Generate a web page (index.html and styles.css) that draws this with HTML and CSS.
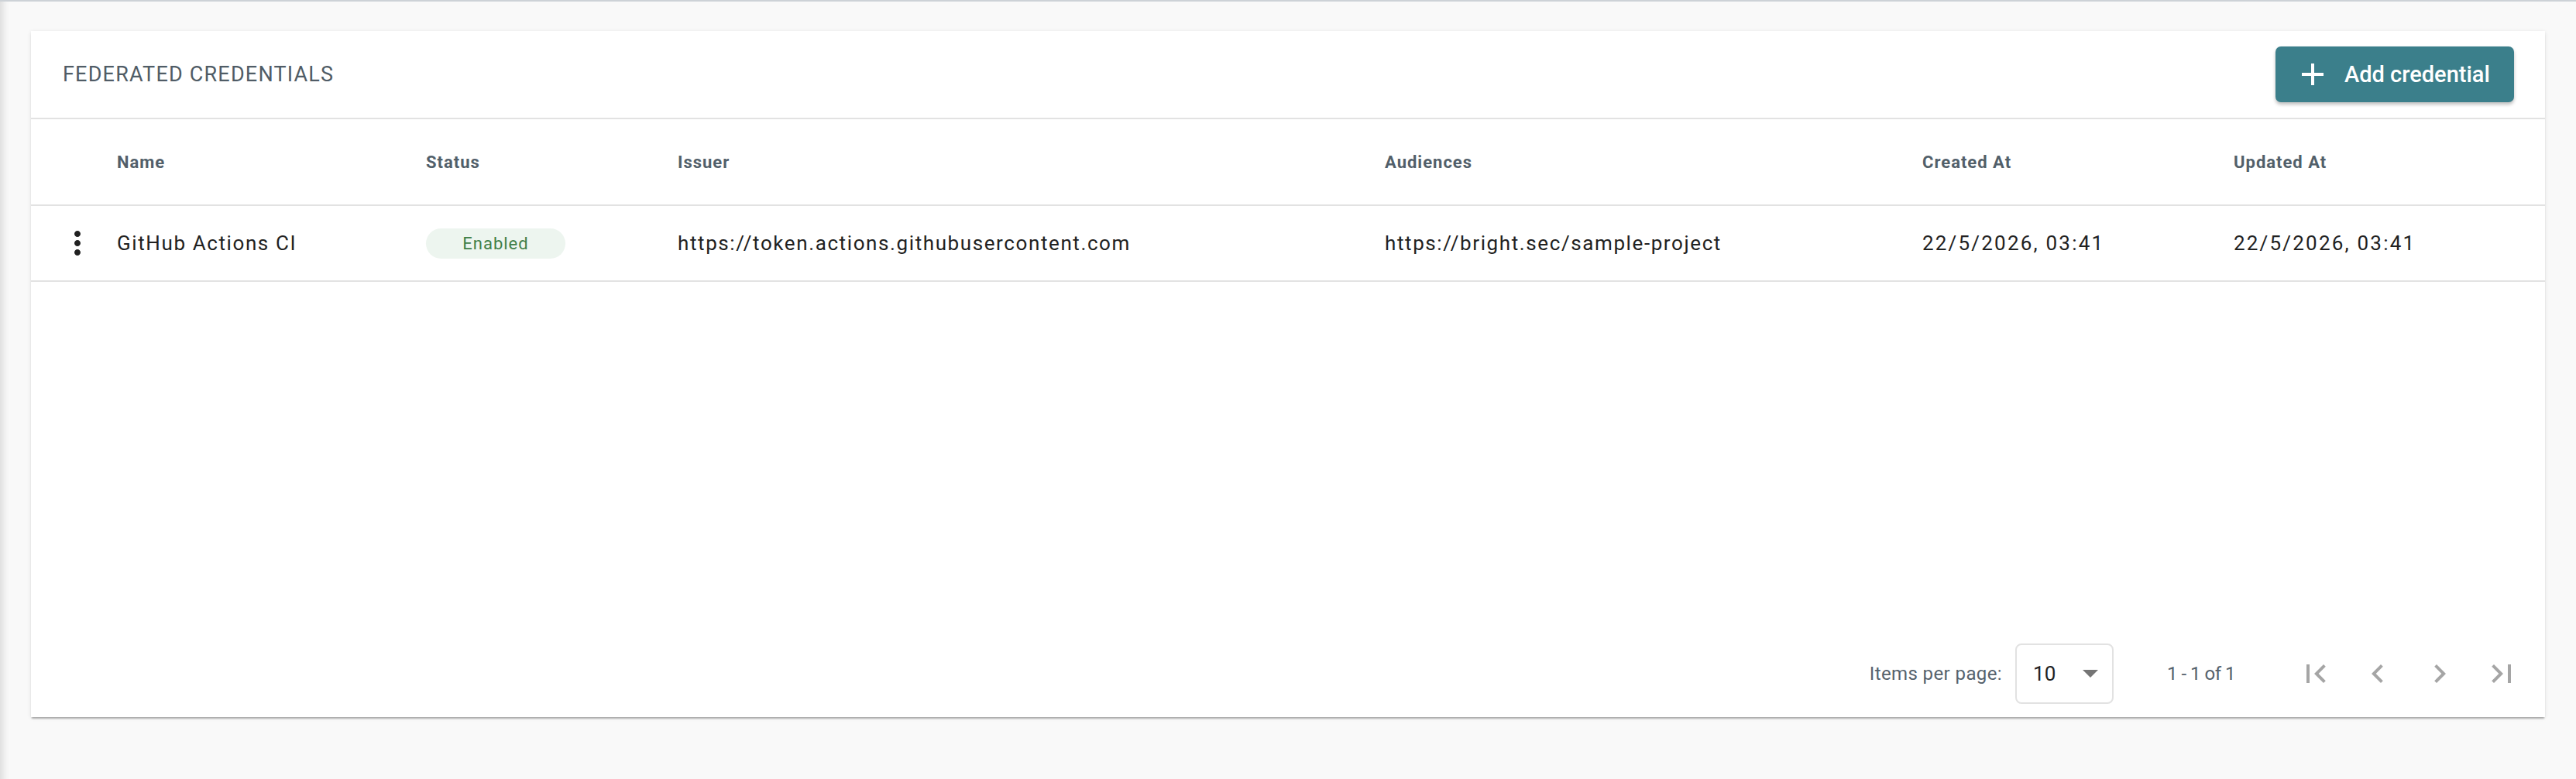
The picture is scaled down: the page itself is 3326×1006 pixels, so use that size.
FILE: index.html
```html
<!DOCTYPE html>
<html lang="en">
<head>
    <meta charset="UTF-8">
    <meta name="viewport" content="width=device-width, initial-scale=1.0">
    <title>Federated Credentials</title>
    <link rel="stylesheet" href="styles.css">
</head>
<body>
    <div class="page">
        <div class="card">
            <div class="card-header">
                <h1>Federated Credentials</h1>
                <button class="add-btn">
                    <svg class="plus" viewBox="0 0 28 28" width="28" height="28">
                        <path d="M14 0v28M0 14h28" stroke="#fff" stroke-width="4" fill="none"/>
                    </svg>
                    <span>Add credential</span>
                </button>
            </div>

            <div class="table">
                <div class="row head">
                    <div class="cell"></div>
                    <div class="cell">Name</div>
                    <div class="cell">Status</div>
                    <div class="cell">Issuer</div>
                    <div class="cell">Audiences</div>
                    <div class="cell">Created At</div>
                    <div class="cell">Updated At</div>
                </div>
                <div class="row">
                    <div class="cell actions">
                        <svg viewBox="0 0 24 24" width="48" height="48">
                            <path fill="#212121" d="M12 8c1.1 0 2-.9 2-2s-.9-2-2-2-2 .9-2 2 .9 2 2 2zm0 2c-1.1 0-2 .9-2 2s.9 2 2 2 2-.9 2-2-.9-2-2-2zm0 6c-1.1 0-2 .9-2 2s.9 2 2 2 2-.9 2-2-.9-2-2-2z"/>
                        </svg>
                    </div>
                    <div class="cell">GitHub Actions CI</div>
                    <div class="cell"><span class="badge">Enabled</span></div>
                    <div class="cell">https://token.actions.githubusercontent.com</div>
                    <div class="cell">https://bright.sec/sample-project</div>
                    <div class="cell date">22/5/2026, 03:41</div>
                    <div class="cell date">22/5/2026, 03:41</div>
                </div>
            </div>

            <div class="paginator">
                <span class="pg-label">Items per page:</span>
                <div class="pg-select">
                    <span>10</span>
                    <span class="arrow"></span>
                </div>
                <span class="pg-range">1 - 1 of 1</span>
                <button class="pg-btn">
                    <svg viewBox="0 0 24 24" width="48" height="48"><path d="M18.41 16.59L13.82 12l4.59-4.59L17 6l-6 6 6 6zM6 6h2v12H6z"/></svg>
                </button>
                <button class="pg-btn">
                    <svg viewBox="0 0 24 24" width="48" height="48"><path d="M15.41 7.41L14 6l-6 6 6 6 1.41-1.41L10.83 12z"/></svg>
                </button>
                <button class="pg-btn">
                    <svg viewBox="0 0 24 24" width="48" height="48"><path d="M10 6L8.59 7.41 13.17 12l-4.58 4.59L10 18l6-6z"/></svg>
                </button>
                <button class="pg-btn">
                    <svg viewBox="0 0 24 24" width="48" height="48"><path d="M5.59 7.41L10.18 12l-4.59 4.59L7 18l6-6-6-6zM16 6h2v12h-2z"/></svg>
                </button>
            </div>
        </div>
    </div>
</body>
</html>
```

FILE: styles.css
```css
body {
    margin: 0;
    padding: 0;
    font-family: Roboto, "Liberation Sans", sans-serif;
    background-color: #f9f9f9;
    color: #212121;
}

.page {
    height: 1004px;
    border-top: 2px solid #cdd2d7;
    padding: 38px 40px 0 40px;
    box-shadow: inset 12px 0 10px -8px rgba(0, 0, 0, 0.12);
}

.card {
    height: 886px;
    background: #ffffff;
    display: flex;
    flex-direction: column;
    box-shadow: 0 3px 2px -1px rgba(0, 0, 0, 0.28), 0 1px 5px rgba(0, 0, 0, 0.1);
}

.card-header {
    height: 112px;
    display: flex;
    align-items: center;
    justify-content: space-between;
    padding: 0 40px 0 41px;
    border-bottom: 2px solid #e2e2e2;
}

h1 {
    margin: 0;
    font-size: 27px;
    font-weight: 400;
    text-transform: uppercase;
    letter-spacing: 1.2px;
    color: #505c66;
}

.add-btn {
    height: 72px;
    width: 308px;
    display: flex;
    align-items: center;
    gap: 27px;
    padding: 0 0 0 34px;
    border: none;
    border-radius: 7px;
    background: #3b7f8b;
    color: #ffffff;
    font-family: inherit;
    font-size: 29px;
    font-weight: 500;
    box-shadow: 0 3px 4px rgba(0, 0, 0, 0.25);
    cursor: pointer;
}

.table {
    flex: 1;
}

.row {
    display: grid;
    grid-template-columns: 111px 399px 325px 913px 694px 402px 1fr;
    align-items: center;
    height: 96px;
    border-bottom: 2px solid #e2e2e2;
    font-size: 26px;
    letter-spacing: 1.6px;
}

.row.head {
    height: 110px;
    font-size: 22px;
    font-weight: 700;
    letter-spacing: 1px;
    color: #525f6a;
}

.cell {
    white-space: nowrap;
}

.cell.date {
    letter-spacing: 2.2px;
}

.actions {
    display: flex;
    padding-left: 36px;
}

.badge {
    display: inline-block;
    width: 180px;
    height: 39px;
    line-height: 39px;
    text-align: center;
    border-radius: 20px;
    background: #edf5ef;
    color: #3f8048;
    font-size: 22px;
    letter-spacing: 1px;
}

.paginator {
    height: 112px;
    display: flex;
    align-items: center;
    justify-content: flex-end;
    padding-right: 16px;
    font-size: 24px;
    color: #56626d;
}

.pg-label {
    letter-spacing: 0.4px;
}

.pg-select {
    width: 127px;
    height: 78px;
    box-sizing: border-box;
    margin-left: 17px;
    padding: 0 18px 0 21px;
    border: 2px solid #e2e2e2;
    border-radius: 8px;
    display: flex;
    align-items: center;
    justify-content: space-between;
    font-size: 26px;
    color: #212121;
}

.arrow {
    width: 0;
    height: 0;
    border-left: 10px solid transparent;
    border-right: 10px solid transparent;
    border-top: 10px solid #757575;
}

.pg-range {
    margin: 0 64px 0 69px;
    letter-spacing: -0.5px;
}

.pg-btn {
    width: 80px;
    height: 80px;
    display: flex;
    align-items: center;
    justify-content: center;
    border: none;
    background: none;
    padding: 0;
    fill: #a5a5a5;
}
```
